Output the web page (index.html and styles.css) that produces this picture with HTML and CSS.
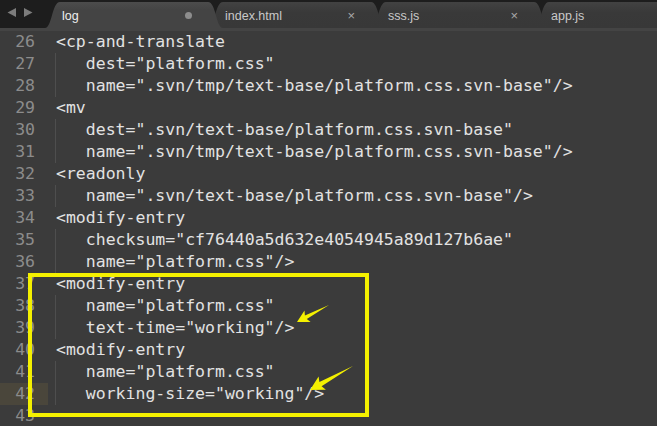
FILE: index.html
```html
<!DOCTYPE html>
<html>
<head>
<meta charset="utf-8">
<link rel="stylesheet" href="styles.css">
</head>
<body>
<div class="window">
  <div class="tabbar">
    <div class="nav">
      <svg width="45" height="28" viewBox="0 0 45 28">
        <polygon points="7.5,12.5 16,8 16,17" fill="#7c7c7c"/>
        <polygon points="24,8 32.5,12.5 24,17" fill="#7c7c7c"/>
      </svg>
    </div>
    <div class="tab active"><span class="label">log</span><span class="dot"></span></div>
    <div class="tab"><span class="label">index.html</span><span class="close">×</span></div>
    <div class="tab"><span class="label">sss.js</span><span class="close">×</span></div>
    <div class="tab"><span class="label">app.js</span></div>
  </div>
  <div class="editor">
    <div class="row"><span class="ln">26</span><span class="code">&lt;cp-and-translate</span></div>
    <div class="row"><span class="ln">27</span><span class="code"><span class="ind">   </span>dest="platform.css"</span></div>
    <div class="row"><span class="ln">28</span><span class="code"><span class="ind">   </span>name=".svn/tmp/text-base/platform.css.svn-base"/&gt;</span></div>
    <div class="row"><span class="ln">29</span><span class="code">&lt;mv</span></div>
    <div class="row"><span class="ln">30</span><span class="code"><span class="ind">   </span>dest=".svn/text-base/platform.css.svn-base"</span></div>
    <div class="row"><span class="ln">31</span><span class="code"><span class="ind">   </span>name=".svn/tmp/text-base/platform.css.svn-base"/&gt;</span></div>
    <div class="row"><span class="ln">32</span><span class="code">&lt;readonly</span></div>
    <div class="row"><span class="ln">33</span><span class="code"><span class="ind">   </span>name=".svn/text-base/platform.css.svn-base"/&gt;</span></div>
    <div class="row"><span class="ln">34</span><span class="code">&lt;modify-entry</span></div>
    <div class="row"><span class="ln">35</span><span class="code"><span class="ind">   </span>checksum="cf76440a5d632e4054945a89d127b6ae"</span></div>
    <div class="row"><span class="ln">36</span><span class="code"><span class="ind">   </span>name="platform.css"/&gt;</span></div>
    <div class="row"><span class="ln">37</span><span class="code">&lt;modify-entry</span></div>
    <div class="row"><span class="ln">38</span><span class="code"><span class="ind">   </span>name="platform.css"</span></div>
    <div class="row"><span class="ln">39</span><span class="code"><span class="ind">   </span>text-time="working"/&gt;</span></div>
    <div class="row"><span class="ln">40</span><span class="code">&lt;modify-entry</span></div>
    <div class="row"><span class="ln">41</span><span class="code"><span class="ind">   </span>name="platform.css"</span></div>
    <div class="row current"><span class="ln">42</span><span class="code"><span class="ind">   </span>working-size="working"/&gt;</span></div>
    <div class="row"><span class="ln">43</span><span class="code"></span></div>
  </div>
  <div class="markbox"></div>
  <svg class="arrows" width="657" height="426" viewBox="0 0 657 426">
    <polygon fill="#f4f000" points="297,322 304.5,310.6 304.9,315.5 329,305 306.8,319.1 310.6,322.1"/>
    <polygon fill="#f4f000" points="310,390 318.6,376.6 319.4,382.1 353,366 321.6,386.2 325.9,389.7"/>
  </svg>
</div>
</body>
</html>
```

FILE: styles.css
```css
html, body {
  margin: 0;
  padding: 0;
  background: #3b3b3b;
}
.window {
  position: relative;
  width: 657px;
  height: 426px;
  overflow: hidden;
  background: #3b3b3b;
}
.tabbar {
  display: flex;
  align-items: flex-end;
  height: 28px;
  background: #1d1d1d;
  border-bottom: 3px solid #444444;
  overflow: hidden;
}
.nav {
  width: 45px;
  height: 28px;
  flex: none;
}
.nav svg { display: block; }
.tab {
  flex: none;
  width: 178px;
  height: 26px;
  margin-right: -15px;
  display: flex;
  align-items: center;
  padding: 0 31px 0 17px;
  box-sizing: border-box;
  background: linear-gradient(#424242, #393939 40%, #383838);
  clip-path: path('M0 26 C 7 26, 7 0, 15 0 L 163 0 C 171 0, 171 26, 178 26 Z');
  font-family: "Liberation Sans", Arial, sans-serif;
  font-size: 12.5px;
  color: #c9c9c9;
}
.tab.active {
  position: relative;
  z-index: 2;
  background: linear-gradient(#4c4c4c, #444444 30%, #444444);
  color: #eeeeee;
}
.label {
  flex: 1;
  padding-top: 1px;
}
.dot {
  width: 7px;
  height: 7px;
  border-radius: 50%;
  background: #8d8d8d;
}
.close {
  font-size: 13px;
  color: #a8a8a8;
  line-height: 1;
}
.editor {
  font-family: "DejaVu Sans Mono", "Liberation Mono", monospace;
  font-size: 16.5px;
  line-height: 22px;
  color: #e2e2e2;
}
.row {
  display: flex;
  height: 22px;
}
.ln {
  flex: none;
  width: 48px;
  box-sizing: border-box;
  padding-right: 13px;
  text-align: right;
  color: #8c8c8c;
}
.row.current .ln {
  background: #4a463b;
}
.code {
  padding-left: 8px;
  white-space: pre;
}
.ind {
  display: inline-block;
  box-shadow: inset 1px 0 0 #4e4e4e;
  margin-left: -1px;
  padding-left: 1px;
}
.markbox {
  position: absolute;
  left: 28px;
  top: 273px;
  width: 341px;
  height: 144px;
  box-sizing: border-box;
  border: 4px solid #f4f000;
}
.arrows {
  position: absolute;
  left: 0;
  top: 0;
  pointer-events: none;
}
```
